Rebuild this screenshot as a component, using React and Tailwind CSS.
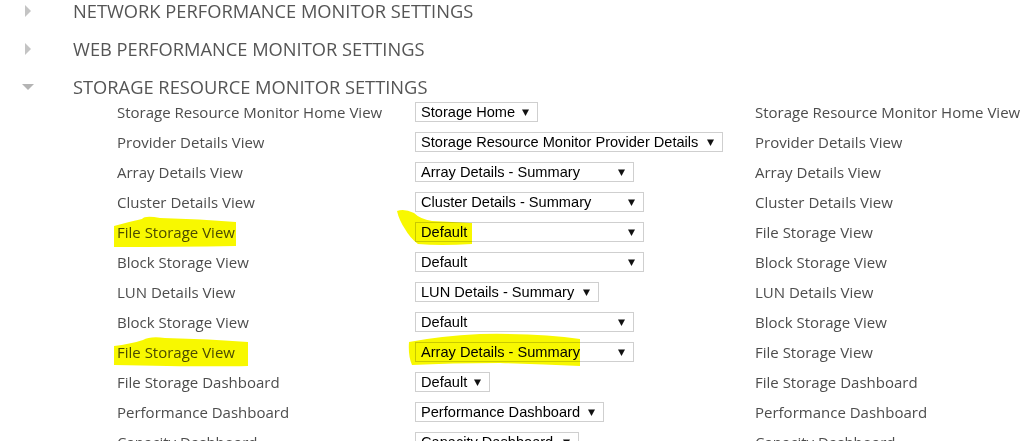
import React from 'react'

const sections = [
  { title: 'Network Performance Monitor Settings', open: false },
  { title: 'Web Performance Monitor Settings', open: false },
  { title: 'Storage Resource Monitor Settings', open: true },
]

const rows = [
  { label: 'Storage Resource Monitor Home View', value: 'Storage Home', w: 123, desc: 'Storage Resource Monitor Home View' },
  { label: 'Provider Details View', value: 'Storage Resource Monitor Provider Details', w: 308, desc: 'Provider Details View' },
  { label: 'Array Details View', value: 'Array Details - Summary', w: 219, desc: 'Array Details View' },
  { label: 'Cluster Details View', value: 'Cluster Details - Summary', w: 229, desc: 'Cluster Details View' },
  { label: 'File Storage View', value: 'Default', w: 229, desc: 'File Storage View' },
  { label: 'Block Storage View', value: 'Default', w: 229, desc: 'Block Storage View' },
  { label: 'LUN Details View', value: 'LUN Details - Summary', w: 184, desc: 'LUN Details View' },
  { label: 'Block Storage View', value: 'Default', w: 219, desc: 'Block Storage View' },
  { label: 'File Storage View', value: 'Array Details - Summary', w: 219, desc: 'File Storage View' },
  { label: 'File Storage Dashboard', value: 'Default', w: 75, desc: 'File Storage Dashboard' },
  { label: 'Performance Dashboard', value: 'Performance Dashboard', w: 189, desc: 'Performance Dashboard' },
  { label: 'Capacity Dashboard', value: 'Capacity Dashboard', w: 164, desc: 'Capacity Dashboard' },
]

function Caret({ open }) {
  return open ? (
    <svg width="12" height="8" viewBox="0 0 12 8"><path d="M0 1 L12 1 L6 7 Z" fill="#b4b4b4" /></svg>
  ) : (
    <svg width="8" height="12" viewBox="0 0 8 12"><path d="M1 0 L7 6 L1 12 Z" fill="#c4c4c4" /></svg>
  )
}

function Select({ value, w }) {
  return (
    <div
      className="flex h-[20px] items-center justify-between border border-[#cfcfcf] bg-white pl-[5px] pr-[8px] pt-[1px] text-[14.6px] leading-none text-black"
      style={{ width: w, fontFamily: '"Liberation Sans", Arial, sans-serif' }}
    >
      <span className="whitespace-nowrap">{value}</span>
      <svg width="7" height="7" viewBox="0 0 7 7"><path d="M0 0.5 L7 0.5 L3.5 7 Z" fill="#111" /></svg>
    </div>
  )
}

export default function App() {
  return (
    <div className="relative h-[441px] w-[1030px] overflow-hidden bg-white" style={{ fontFamily: '"Open Sans", sans-serif' }}>
      <div className="flex flex-col">
        {sections.map((s, i) => (
          <div key={s.title} className={i === 2 ? 'h-[21px]' : 'h-[38px]'}>
            <div className="flex h-[22px] items-center">
              <div className="flex w-[73px] justify-center pr-[17px]">
                <Caret open={s.open} />
              </div>
              <span className="whitespace-nowrap text-[18.3px] leading-[22px] uppercase text-[#555]">{s.title}</span>
            </div>
          </div>
        ))}
      </div>

      <div className="flex flex-col pl-[117px]">
        {rows.map((r, i) => (
          <div key={i} className="flex h-[30px] items-center text-[15px] text-[#4d4d4d]">
            <div className="w-[298px] whitespace-nowrap">{r.label}</div>
            <div className="w-[340px]">
              <Select value={r.value} w={r.w} />
            </div>
            <div className="whitespace-nowrap">{r.desc}</div>
          </div>
        ))}
      </div>

      <svg className="pointer-events-none absolute left-0 top-0 mix-blend-multiply" width="1030" height="441">
        <g fill="#f8f800">
          <path d="M114 226 Q128 222 142 219 Q145 215 160 218 Q200 219 236 222 L236 246 Q180 247 114 247 Z" />
          <path d="M397 211 Q404 208 414 213 Q420 219 432 221 L472 223 L472 244 Q440 246 418 244 Q410 238 405 229 Q399 220 397 211 Z" />
          <path d="M114 346 Q130 344 143 340 Q150 336 165 338 Q210 339 248 342 L248 366 Q200 367 114 365 Z" />
          <path d="M409 342 Q440 336 480 334 Q540 333 580 339 L580 366 Q540 364 500 363 Q450 363 412 365 Q408 356 409 342 Z" />
        </g>
      </svg>
    </div>
  )
}
